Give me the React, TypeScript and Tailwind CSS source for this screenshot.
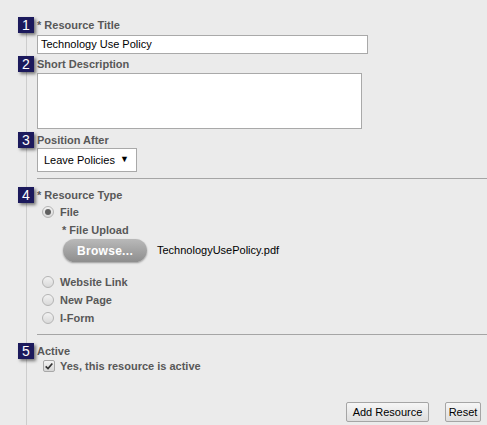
import type { ReactNode } from "react";

const font = "font-['Liberation_Sans',Arial,sans-serif]";

function Badge({ n }: { n: number }) {
  return (
    <span className="flex h-4 w-4 shrink-0 items-center justify-center bg-[#1c1a5c] text-[14px] leading-none text-white shadow-[2px_2px_3px_rgba(0,0,0,0.5)]">
      {n}
    </span>
  );
}

function StepLabel({ n, children }: { n: number; children: ReactNode }) {
  return (
    <div className="-ml-[19px] flex h-4 items-center gap-[3px]">
      <Badge n={n} />
      <span className="text-[11px] font-bold text-[#585858]">{children}</span>
    </div>
  );
}

function Radio({ checked, label }: { checked?: boolean; label: string }) {
  return (
    <div className="flex h-[18px] items-center pl-[5px]">
      <span className="flex h-3 w-3 items-center justify-center rounded-full border border-[#b4b4b4] bg-gradient-to-b from-[#f2f2f2] to-[#d9d9d9]">
        {checked && <span className="h-[6px] w-[6px] rounded-full bg-[#606060]" />}
      </span>
      <span className="ml-[6px] text-[11px] font-bold text-[#585858]">{label}</span>
    </div>
  );
}

export default function App() {
  return (
    <div className={`${font} h-[425px] w-[487px] overflow-hidden bg-[#ebebeb] pt-[17px]`}>
      <div className="ml-[26px] min-h-[420px] border-l border-[#cdcdcd] pl-[10px]">
        <StepLabel n={1}>* Resource Title</StepLabel>
        <div className="mt-[2px] flex h-[19px] w-[331px] items-center border border-[#a9a9a9] bg-white pl-[3px] text-[11px] text-black">
          Technology Use Policy
        </div>

        <div className="mt-[2px]">
          <StepLabel n={2}>Short Description</StepLabel>
        </div>
        <div className="mt-[1px] h-[56px] w-[325px] border border-[#a9a9a9] bg-white" />

        <div className="mt-[3px]">
          <StepLabel n={3}>Position After</StepLabel>
        </div>
        <div className="flex h-[24px] w-[100px] items-center justify-between border border-[#a9a9a9] bg-white pl-[6px] pr-[7px] text-[11px] text-black">
          <span>Leave Policies</span>
          <span className="text-[9px]">▼</span>
        </div>

        <div className="mt-[6px] h-px bg-[#a5a5a5]" />

        <div className="mt-[8px]">
          <StepLabel n={4}>* Resource Type</StepLabel>
        </div>
        <Radio checked label="File" />
        <div className="mt-[2px] flex h-[14px] items-center pl-[25px] text-[11px] font-bold text-[#585858]">
          * File Upload
        </div>
        <div className="mt-[2px] flex items-center pl-[26px]">
          <span className="flex h-[23px] w-[84px] items-center justify-center rounded-[12px] bg-gradient-to-b from-[#b9b9b9] to-[#8e8e8e] text-[12px] font-bold tracking-[0.3px] text-white shadow-[0_1px_2px_rgba(0,0,0,0.35)]">
            Browse...
          </span>
          <span className="ml-[10px] text-[11px] text-black">TechnologyUsePolicy.pdf</span>
        </div>

        <div className="mt-[11px]">
          <Radio label="Website Link" />
          <Radio label="New Page" />
          <Radio label="I-Form" />
        </div>

        <div className="mt-[7px] h-px bg-[#a5a5a5]" />

        <div className="mt-[8px]">
          <StepLabel n={5}>Active</StepLabel>
        </div>
        <div className="flex h-[14px] items-center pl-[6px]">
          <span className="flex h-3 w-3 items-center justify-center rounded-[2px] border border-[#a8a8a8] bg-gradient-to-b from-[#f4f4f4] to-[#d6d6d6]">
            <svg viewBox="0 0 12 12" className="h-[10px] w-[10px]">
              <path d="M2 6.5 L4.8 9 L10 3" fill="none" stroke="#333" strokeWidth="2" />
            </svg>
          </span>
          <span className="ml-[5px] text-[11px] font-bold text-[#585858]">Yes, this resource is active</span>
        </div>

        <div className="mt-[29px] flex justify-end gap-4 pr-[6px]">
          <button
            type="button"
            className="h-5 w-[83px] rounded-[2px] border border-[#a5a5a5] bg-gradient-to-b from-[#f6f6f6] to-[#dedede] text-[11px] text-black"
          >
            Add Resource
          </button>
          <button
            type="button"
            className="h-5 w-[36px] rounded-[2px] border border-[#a5a5a5] bg-gradient-to-b from-[#f6f6f6] to-[#dedede] text-[11px] text-black"
          >
            Reset
          </button>
        </div>
      </div>
    </div>
  );
}
